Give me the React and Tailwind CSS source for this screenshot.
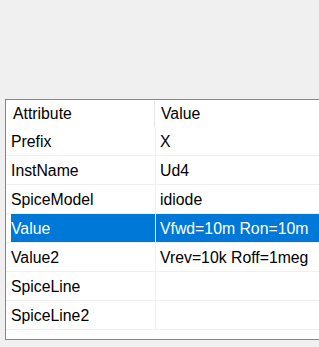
import React from "react";

const rows = [
  ["Prefix", "X"],
  ["InstName", "Ud4"],
  ["SpiceModel", "idiode"],
  ["Value", "Vfwd=10m Ron=10m", true],
  ["Value2", "Vrev=10k Roff=1meg"],
  ["SpiceLine", ""],
  ["SpiceLine2", ""],
];

export default function App() {
  return (
    <div
      className="w-[319px] h-[347px] bg-[#f0f0f0] pt-[99px] pl-[5px] overflow-hidden"
      style={{ fontFamily: '"Liberation Sans", Arial, sans-serif' }}
    >
      <div className="h-[241px] w-[320px] bg-white border-l border-t border-b border-[#828790] overflow-hidden text-[15.8px] text-black">
        <div className="flex h-[27px] items-center pt-[1px]">
          <div className="w-[148px] pl-[7px] shrink-0">Attribute</div>
          <div className="w-px h-full bg-[#e5e5e5] shrink-0" />
          <div className="pl-[6px]">Value</div>
        </div>
        {rows.map(([a, v, sel]) => (
          <div key={a} className="flex h-[29px] border-b border-[#f0f0f0]">
            <div className="w-[149px] shrink-0 flex">
              <div className={`ml-[5px] flex-1 flex items-center pt-[2px] ${sel ? "bg-[#0078d7] text-white" : ""}`}>
                {a}
              </div>
            </div>
            <div className="w-px bg-[#f0f0f0] shrink-0" />
            <div className={`flex-1 flex items-center pl-[4px] pt-[2px] ${sel ? "bg-[#0078d7] text-white" : ""}`}>{v}</div>
          </div>
        ))}
      </div>
    </div>
  );
}
